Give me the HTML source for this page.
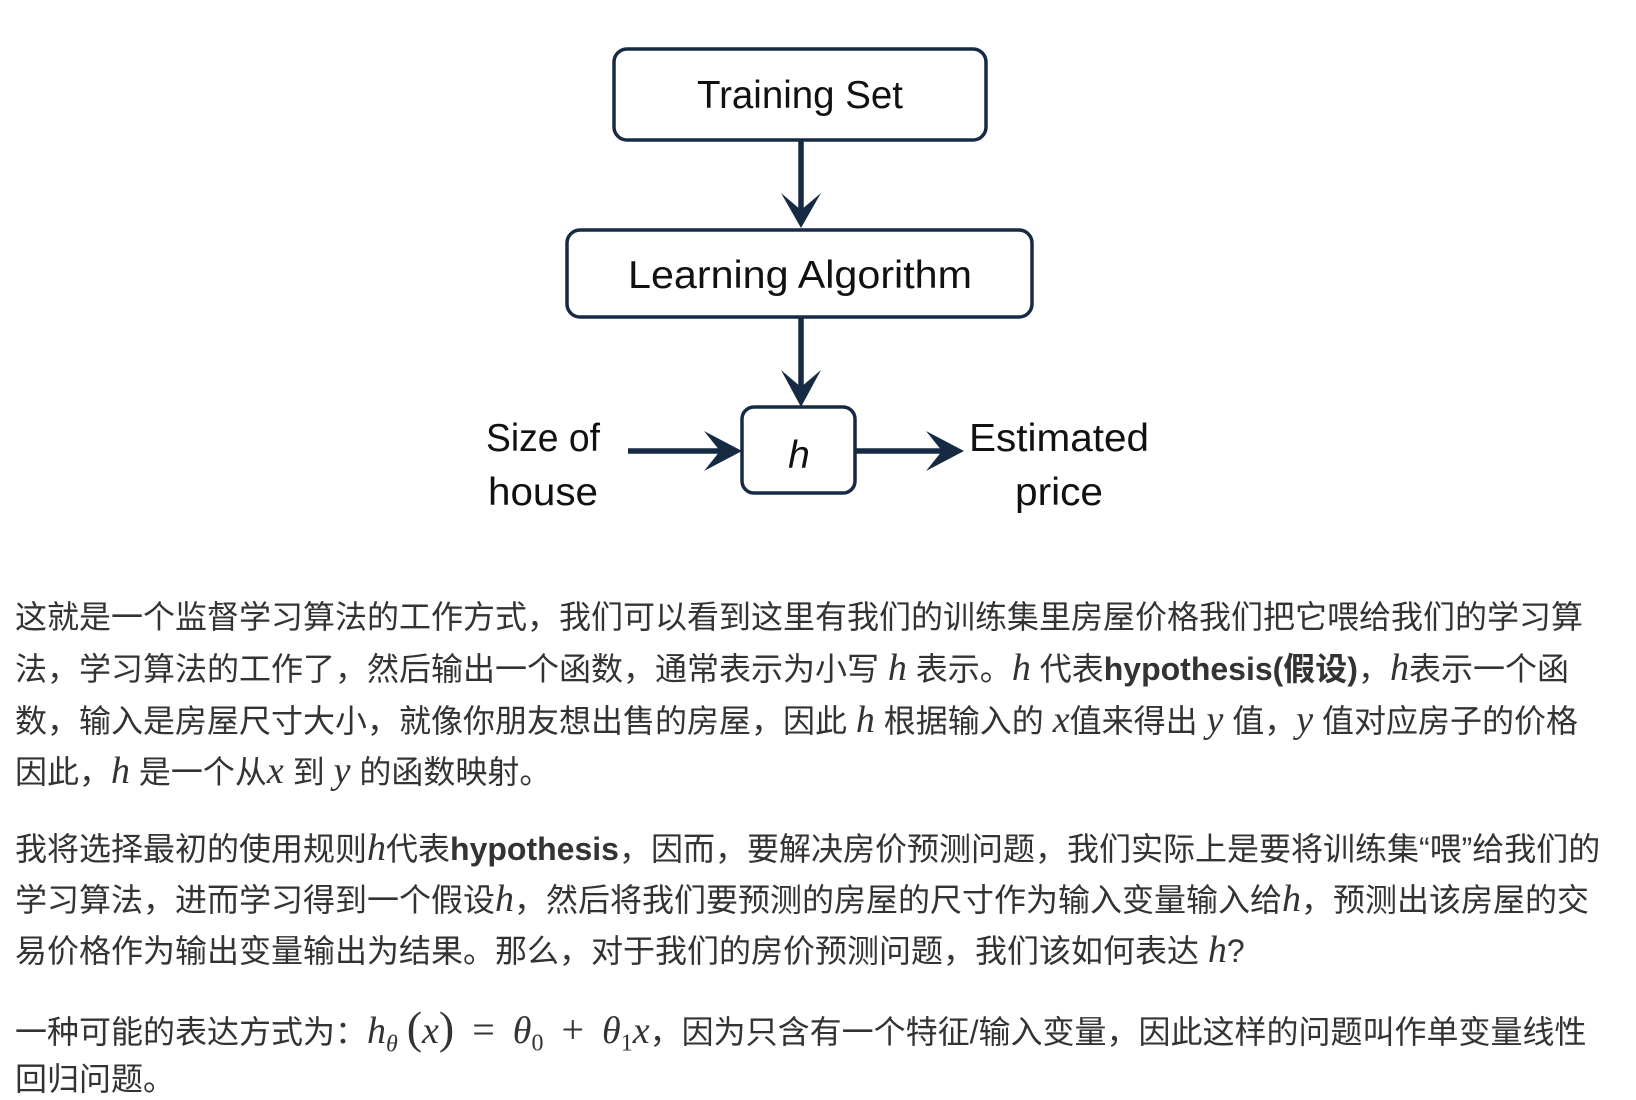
<!DOCTYPE html>
<html><head><meta charset="utf-8">
<style>
html,body{margin:0;padding:0;background:#fff;width:1636px;height:1100px;overflow:hidden;position:relative}
.l{position:absolute;left:15px;white-space:nowrap;font-family:"Liberation Sans","Noto Sans CJK SC",sans-serif;font-size:32px;color:#333;line-height:40px}
.m{font-family:"Liberation Serif",serif;font-style:italic;font-size:38px}
.r{font-family:"Liberation Serif",serif;font-size:38px}
.op{font-family:"Liberation Serif",serif;font-size:40px;margin:0 18px}
b{font-weight:bold}
svg text{font-family:"Liberation Sans",sans-serif;fill:#111}
</style></head><body>
<svg width="1636" height="540" style="position:absolute;left:0;top:0">
<g fill="none" stroke="#172a44" stroke-width="3.5">
<rect x="614" y="49" width="372" height="91" rx="13"/>
<rect x="567" y="230" width="465" height="87" rx="13"/>
<rect x="742" y="407" width="113" height="86" rx="12"/>
</g>
<g stroke="#172a44" stroke-width="5.5">
<line x1="801" y1="140" x2="801" y2="220"/>
<line x1="801" y1="317" x2="801" y2="399"/>
<line x1="628" y1="451" x2="734" y2="451"/>
<line x1="855" y1="451" x2="955" y2="451"/>
</g>
<g fill="#172a44">
<path d="M781 193 L801 228 L821 193 L801 210 Z"/>
<path d="M781 370 L801 407 L821 370 L801 387 Z"/>
<path d="M704 431 L742 451 L704 471 L720 451 Z"/>
<path d="M926 431 L964 451 L926 471 L942 451 Z"/>
</g>
<g font-size="39">
<text x="800" y="108" text-anchor="middle" textLength="206" lengthAdjust="spacingAndGlyphs">Training Set</text>
<text x="800" y="288" text-anchor="middle" textLength="344" lengthAdjust="spacingAndGlyphs">Learning Algorithm</text>
<text x="799" y="468" font-style="italic" text-anchor="middle">h</text>
<text x="543" y="451" text-anchor="middle" textLength="114" lengthAdjust="spacingAndGlyphs">Size of</text>
<text x="543" y="505" text-anchor="middle" textLength="110" lengthAdjust="spacingAndGlyphs">house</text>
<text x="1059" y="451" text-anchor="middle" textLength="180" lengthAdjust="spacingAndGlyphs">Estimated</text>
<text x="1059" y="505" text-anchor="middle" textLength="88" lengthAdjust="spacingAndGlyphs">price</text>
</g>
</svg>

<div class="l" style="top:597px">这就是一个监督学习算法的工作方式，我们可以看到这里有我们的训练集里房屋价格我们把它喂给我们的学习算</div>
<div class="l" style="top:648px">法，学习算法的工作了，然后输出一个函数，通常表示为小写 <span class="m">h</span> 表示。<span class="m">h</span> 代表<b>hypothesis(假设)</b>，<span class="m">h</span>表示一个函</div>
<div class="l" style="top:700px">数，输入是房屋尺寸大小，就像你朋友想出售的房屋，因此 <span class="m">h</span> 根据输入的 <span class="m">x</span>值来得出 <span class="m">y</span> 值，<span class="m">y</span> 值对应房子的价格</div>
<div class="l" style="top:751px">因此，<span class="m">h</span> 是一个从<span class="m">x</span> 到 <span class="m">y</span> 的函数映射。</div>

<div class="l" style="top:828px">我将选择最初的使用规则<span class="m">h</span>代表<b>hypothesis</b>，因而，要解决房价预测问题，我们实际上是要将训练集“喂”给我们的</div>
<div class="l" style="top:879px">学习算法，进而学习得到一个假设<span class="m">h</span>，然后将我们要预测的房屋的尺寸作为输入变量输入给<span class="m">h</span>，预测出该房屋的交</div>
<div class="l" style="top:930px">易价格作为输出变量输出为结果。那么，对于我们的房价预测问题，我们该如何表达 <span class="m">h</span>?</div>

<div class="l" style="top:1008px">一种可能的表达方式为：<span class="m">h<sub style="font-size:24px">θ</sub></span>&nbsp;<span class="r" style="font-size:46px">(</span><span class="m">x</span><span class="r" style="font-size:46px">)</span><span class="op">=</span><span class="m">θ</span><sub class="r" style="font-size:24px">0</sub><span class="op">+</span><span class="m">θ</span><sub class="r" style="font-size:24px">1</sub><span class="m">x</span>，因为只含有一个特征/输入变量，因此这样的问题叫作单变量线性</div>
<div class="l" style="top:1059px">回归问题。</div>
</body></html>
